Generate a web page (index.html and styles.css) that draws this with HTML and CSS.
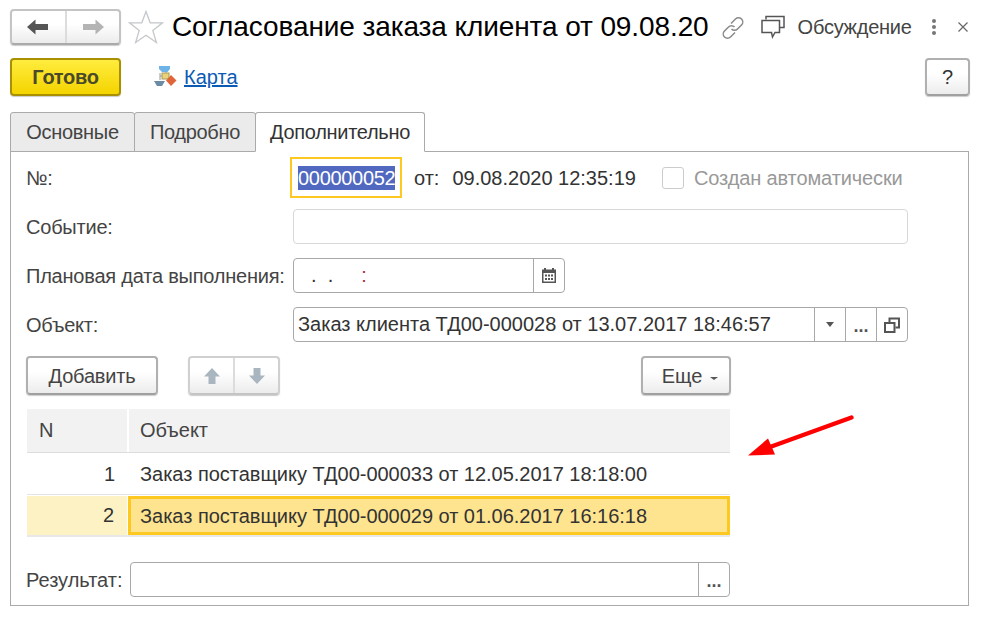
FILE: index.html
```html
<!DOCTYPE html>
<html lang="ru">
<head>
<meta charset="utf-8">
<title>Согласование заказа клиента</title>
<link rel="stylesheet" href="styles.css">
</head>
<body>
<header class="titlebar">
  <div class="btn nav">
    <span class="nav-cell"><svg width="24" height="18" viewBox="0 0 24 18"><path d="M1 9 9.500 1.500V6H22V12H9.500V16.500Z" fill="#555"/></svg></span>
    <span class="nav-cell"><svg width="24" height="18" viewBox="0 0 24 18"><path d="M23 9 14.500 1.500V6H2V12H14.500V16.500Z" fill="#b4b4b4"/></svg></span>
  </div>
  <svg class="star" width="36" height="34" viewBox="0 0 36 34"><path d="M18 1.500 22.200 12.800H34.500L24.800 20.400 28.400 32.500 18 25.300 7.600 32.500 11.200 20.400 1.500 12.800H13.800Z" fill="#fff" stroke="#c4c8cc" stroke-width="1.300"/></svg>
  <h1 class="title">Согласование заказа клиента от 09.08.20</h1>
  <svg class="link-icon" width="26" height="26" viewBox="0 0 26 26" fill="none" stroke="#8a8a8a" stroke-width="1.500"><path d="M11 8.500 15.500 4a4 4 0 0 1 6 6L17.500 14a4 4 0 0 1-6 0"/><path d="M15 17.500 10.500 22a4 4 0 0 1-6-6L8.500 12a4 4 0 0 1 6 0"/></svg>
  <svg class="chat-icon" width="26" height="26" viewBox="0 0 26 26" fill="#fff" stroke="#555" stroke-width="1.500"><path d="M6 5.500V2.500H24V13.500H20"/><path d="M2 6.500H19.500V18.500H15L12.500 23 11.500 18.500H2Z"/></svg>
  <span class="discuss">Обсуждение</span>
  <span class="dots"><i></i><i></i><i></i></span>
  <svg class="close" width="12" height="12" viewBox="0 0 12 12"><path d="M1.500 1.500 10.500 10.500M10.500 1.500 1.500 10.500" stroke="#666" stroke-width="1.200"/></svg>
</header>

<div class="commandbar">
  <button class="btn primary">Готово</button>
  <svg class="map-icon" width="24" height="24" viewBox="0 0 24 24">
    <path d="M6 8V15M6 11H12M12 7V12" stroke="#999" fill="none"/>
    <path d="M5 1H16V4L13.500 7H8L5 4Z" fill="#6db3e8"/>
    <rect x="8" y="8" width="7" height="6" fill="#e8d27a" stroke="#a89c5c"/>
    <path d="M0 16H11L8 21H3Z" fill="#6b8aa3"/>
    <path d="M17 10 22.500 15.500 17 21 12 15.500Z" fill="#e0663a"/>
  </svg>
  <a class="map-link" href="#">Карта</a>
  <button class="btn help">?</button>
</div>

<nav class="tabs">
  <div class="tab t1">Основные</div>
  <div class="tab t2">Подробно</div>
  <div class="tab active">Дополнительно</div>
</nav>

<main class="panel">
  <div class="row row-num">
    <label class="lbl">№:</label>
    <div class="num-box"><span class="sel">000000052</span></div>
    <span class="ot">от:</span>
    <span class="date">09.08.2020 12:35:19</span>
    <span class="check"></span>
    <span class="check-text">Создан автоматически</span>
  </div>
  <div class="row row-event">
    <label class="lbl">Событие:</label>
    <div class="field disabled wide"></div>
  </div>
  <div class="row row-plan">
    <label class="lbl">Плановая дата выполнения:</label>
    <div class="field plan">
      <span class="mask">&nbsp;&nbsp;.&nbsp;&nbsp;.&nbsp;&nbsp;&nbsp;&nbsp;&nbsp;<b>:</b></span>
      <span class="cell cal"><svg width="16" height="17" viewBox="0 0 16 17"><path d="M1 2.500H15V16H1Z" fill="#555"/><rect x="2.500" y="6" width="11" height="8.500" fill="#fff"/><path d="M4 1V4M12 1V4" stroke="#555" stroke-width="2"/><path d="M4 7.500H6V9.500H4ZM7 7.500H9V9.500H7ZM10 7.500H12V9.500H10ZM4 11H6V13H4ZM7 11H9V13H7ZM10 11H12V13H10Z" fill="#555"/></svg></span>
    </div>
  </div>
  <div class="row row-obj">
    <label class="lbl">Объект:</label>
    <div class="field wide">
      <span class="value">Заказ клиента ТД00-000028 от 13.07.2017 18:46:57</span>
      <span class="cell"><i class="tri"></i></span>
      <span class="cell dotted">...</span>
      <span class="cell"><svg width="16" height="16" viewBox="0 0 16 16" fill="none" stroke="#555" stroke-width="2"><path d="M5.500 5V1.500H15V10.500H11.500"/><path d="M1 6H10.500V15H1Z"/></svg></span>
    </div>
  </div>

  <div class="toolbar">
    <button class="btn add">Добавить</button>
    <div class="btn arrows">
      <span class="nav-cell"><svg width="16" height="18" viewBox="0 0 16 18"><path d="M8 1 16 9.500H11.500V17H4.500V9.500H0Z" fill="#a9b6bf"/></svg></span>
      <span class="nav-cell"><svg width="16" height="18" viewBox="0 0 16 18"><path d="M8 17 16 8.500H11.500V1H4.500V8.500H0Z" fill="#a9b6bf"/></svg></span>
    </div>
    <button class="btn more">Еще<i class="tri small"></i></button>
  </div>

  <div class="table">
    <div class="thead">
      <div class="c-n">N</div>
      <div class="c-o">Объект</div>
    </div>
    <div class="tr">
      <div class="c-n num">1</div>
      <div class="c-o">Заказ поставщику ТД00-000033 от 12.05.2017 18:18:00</div>
    </div>
    <div class="tr current">
      <div class="c-n num">2</div>
      <div class="c-o">Заказ поставщику ТД00-000029 от 01.06.2017 16:16:18</div>
    </div>
  </div>

  <div class="row row-result">
    <label class="lbl-short">Результат:</label>
    <div class="field result">
      <span class="value"></span>
      <span class="cell dotted">...</span>
    </div>
  </div>

  <svg class="red-arrow" width="110" height="44" viewBox="0 0 110 44"><path d="M103.500 3.500 22 33" stroke="#f00" stroke-width="4.500" stroke-linecap="round" fill="none"/><path d="M0 41.500 20 24.500 27 40.500Z" fill="#f00"/></svg>
</main>
</body>
</html>
```
FILE: styles.css
```css
* { box-sizing: border-box; }
html, body { margin: 0; padding: 0; }
body {
  width: 985px;
  height: 620px;
  overflow: hidden;
  background: #fff;
  color: #333;
  font: 20px/22px "Liberation Sans", Arial, sans-serif;
  padding: 9px 15px 0 10px;
}
.btn {
  border: 2px solid #b0b0b0;
  border-bottom-color: #a0a0a0;
  border-radius: 4px;
  background: linear-gradient(#fff 40%, #ececec);
  box-shadow: 0 1px 1px #ccc;
  color: #444;
  font: inherit;
  padding: 0;
}
.titlebar { display: flex; align-items: center; height: 36px; }
.nav { display: flex; width: 111px; height: 36px; flex: none; border-color: #c4c4c4; border-bottom-color: #aaa; }
.nav-cell { flex: 1; display: flex; align-items: center; justify-content: center; }
.nav-cell + .nav-cell { border-left: 2px solid #dcdcdc; }
.star { margin-left: 7px; flex: none; }
.title { margin: 0 0 0 8px; font-weight: 400; font-size: 28px; line-height: 36px; color: #000; white-space: nowrap; letter-spacing: -.1px; }
.link-icon { margin-left: 11px; margin-top: 2px; flex: none; }
.chat-icon { margin-left: 14px; flex: none; }
.discuss { margin-left: 12px; color: #444; letter-spacing: -.25px; }
.dots { margin-left: 20px; display: flex; flex-direction: column; gap: 2px; }
.dots i { width: 4px; height: 4px; border-radius: 50%; background: #777; }
.close { margin-left: 21px; flex: none; }

.commandbar { display: flex; align-items: center; height: 38px; margin-top: 13px; }
.primary {
  width: 111px; height: 38px;
  border-color: #a89000;
  background: linear-gradient(#ffec3d, #f4d400);
  font-weight: 700;
  color: #4a4a2a;
  letter-spacing: -.3px;
}
.map-icon { margin-left: 33px; flex: none; }
.map-link { margin-left: 6px; color: #0b5bb5; text-decoration: underline; }
.help { margin-left: auto; width: 45px; height: 38px; color: #333; }

.tabs { display: flex; height: 40px; margin-top: 16px; position: relative; z-index: 1; }
.tab {
  border: 1px solid #aaa;
  border-radius: 3px 3px 0 0;
  background: #ebebeb;
  padding: 8px 0 0;
  text-align: center;
  color: #444;
  letter-spacing: -.3px;
}
.t1 { width: 125px; }
.t2 { width: 122px; margin-left: -1px; }
.active { width: 170px; margin-left: -1px; background: #fff; border-bottom-color: #fff; color: #333; }

.panel {
  position: relative;
  width: 959px;
  height: 455px;
  margin-top: -1px;
  border: 1px solid #aaa;
  padding: 0 15px;
}
.row { display: flex; align-items: center; }
.lbl { width: 267px; flex: none; white-space: nowrap; color: #444; letter-spacing: -.22px; }
.row-num { height: 41px; margin-top: 5px; }
.num-box {
  width: 112px; height: 41px; margin-left: -3px;
  border: 2px solid #fdc921;
  display: flex; align-items: center; padding-left: 6px;
}
.sel { background: #5068bf; color: #fff; line-height: 24px; letter-spacing: -.3px; }
.ot { margin-left: 12px; }
.date { margin-left: 13px; color: #333; }
.check { width: 22px; height: 22px; margin-left: 26px; border: 1px solid #ccc; border-radius: 3px; }
.check-text { margin-left: 10px; color: #999; letter-spacing: -.12px; }

.field {
  display: flex; align-items: stretch; height: 35px;
  border: 1px solid #a8a8a8;
  border-radius: 4px;
  background: #fff;
}
.wide { width: 615px; }
.disabled { border-color: #d8d8d8; }
.row-event { margin-top: 11px; }
.row-plan { margin-top: 14px; }
.row-obj { margin-top: 14px; }
.plan { width: 272px; }
.mask { flex: 1; padding-left: 6px; line-height: 33px; color: #333; white-space: nowrap; }
.mask b { color: #a33; font-weight: 400; }
.value { flex: 1; padding-left: 4px; line-height: 33px; white-space: nowrap; color: #333; }
.cell { width: 31px; flex: none; border-left: 1px solid #a8a8a8; display: flex; align-items: center; justify-content: center; }
.dotted { font-weight: 700; font-size: 18px; color: #555; padding-top: 2px; }
.tri { width: 0; height: 0; border: 4px solid transparent; border-top: 5px solid #555; border-bottom: 0; }
.tri.small { display: inline-block; margin-left: 8px; vertical-align: 3px; border-width: 3px 4px 0; border-top-color: #555; border-top-style: solid; }

.toolbar { display: flex; height: 39px; margin-top: 14px; }
.add { width: 132px; letter-spacing: -.2px; }
.arrows { display: flex; width: 92px; margin-left: 30px; border-color: #d0d0d0; border-bottom-color: #c4c4c4; }
.more { width: 90px; margin-left: auto; margin-right: 222px; padding-left: 8px; }

.table { width: 703px; margin-top: 14px; margin-left: 1px; }
.thead { display: flex; height: 44px; background: #f2f2f2; border-bottom: 1px solid #ddd; color: #444; }
.c-n { width: 100px; flex: none; padding: 10px 12px 0; }
.c-o { flex: 1; padding: 10px 11px 0; white-space: nowrap; color: #333; letter-spacing: -.02px; }
.thead .c-o { border-left: 2px solid #fff; color: #444; }
.tr { display: flex; height: 42px; border-bottom: 1px solid #e4e4e4; }
.tr .c-n, .tr .c-o { padding-top: 10px; }
.tr .c-o { padding-left: 13px; }
.num { text-align: right; padding-right: 12px; }
.current { border-bottom: 2px solid #e8e8e8; height: 42px; }
.current .c-n.num { background: #fdf2c3; margin: 1px 1px 0 0; padding: 8px 13px 0 12px; height: 39px; }
.current .c-o {
  background: #fee48f;
  border: 3px solid #fdc921;
  padding: 6px 0 0 9px;
  margin-top: 1px;
  height: 39px;
}

.row-result { margin-top: 25px; }
.lbl-short { width: 104px; flex: none; color: #444; }
.result { width: 600px; }

.red-arrow { position: absolute; left: 737px; top: 262px; }
```
